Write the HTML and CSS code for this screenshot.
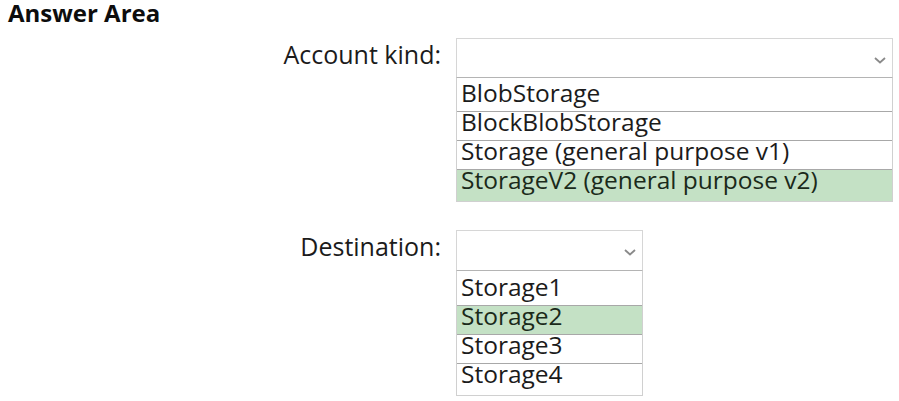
FILE: index.html
```html
<!DOCTYPE html>
<html>
<head>
<meta charset="utf-8">
<link rel="stylesheet" href="styles.css">
</head>
<body>
<h1 class="title">Answer Area</h1>
<div class="form">
  <div class="label">Account kind:</div>
  <div class="dropdown wide">
    <div class="select">
      <svg class="chev" width="12" height="7" viewBox="0 0 12 7"><path d="M1 1 L6 5.5 L11 1" fill="none" stroke="#8a8a8a" stroke-width="1.8"/></svg>
    </div>
    <ul class="options">
      <li>BlobStorage</li>
      <li>BlockBlobStorage</li>
      <li>Storage (general purpose v1)</li>
      <li class="sel">StorageV2 (general purpose v2)</li>
    </ul>
  </div>
  <div class="label">Destination:</div>
  <div class="dropdown narrow">
    <div class="select">
      <svg class="chev" width="12" height="7" viewBox="0 0 12 7"><path d="M1 1 L6 5.5 L11 1" fill="none" stroke="#8a8a8a" stroke-width="1.8"/></svg>
    </div>
    <ul class="options">
      <li>Storage1</li>
      <li class="sel">Storage2</li>
      <li>Storage3</li>
      <li>Storage4</li>
    </ul>
  </div>
</div>
</body>
</html>
```
FILE: styles.css
```css
html, body {
  margin: 0;
  padding: 0;
  background: #ffffff;
}
body {
  font-family: "Open Sans", "Noto Sans", sans-serif;
  color: #1b1b1b;
  width: 899px;
  height: 401px;
  overflow: hidden;
}
.title {
  margin: 0;
  padding: 0 0 0 8px;
  font-size: 24px;
  font-weight: 700;
  line-height: 26px;
  color: #0d0d0d;
}
.form {
  display: grid;
  grid-template-columns: 441px auto;
  column-gap: 15px;
  row-gap: 28px;
  align-items: start;
  margin-top: 12px;
}
.label {
  text-align: right;
  font-size: 25px;
  line-height: 33px;
  color: #1b1b1b;
}
.dropdown.wide { width: 437px; }
.dropdown.narrow { width: 187px; }
.select {
  box-sizing: border-box;
  height: 40px;
  border: 1px solid #d6d6d6;
  border-bottom-color: #b4b4b4;
  display: flex;
  justify-content: flex-end;
  align-items: center;
  padding-right: 6px;
  padding-top: 4px;
}
.narrow .select {
  height: 41px;
}
.chev {
  display: block;
}
.options {
  list-style: none;
  margin: 0;
  padding: 5px 0 0 0;
  border-left: 1px solid #d0d0d0;
  border-right: 1px solid #d0d0d0;
  border-bottom: 1px solid #d0d0d0;
}
.narrow .options {
  padding-top: 6px;
}
.options li {
  font-size: 24.5px;
  line-height: 19px;
  height: 19px;
  padding: 0 0 9px 4px;
  border-bottom: 1px solid #a8a8a8;
  color: #1b1b1b;
  white-space: nowrap;
}
.options li:last-child {
  border-bottom: none;
  padding-bottom: 12px;
}
.options li.sel {
  background: #c4e1c5;
  color: #1a2a1a;
}
```
